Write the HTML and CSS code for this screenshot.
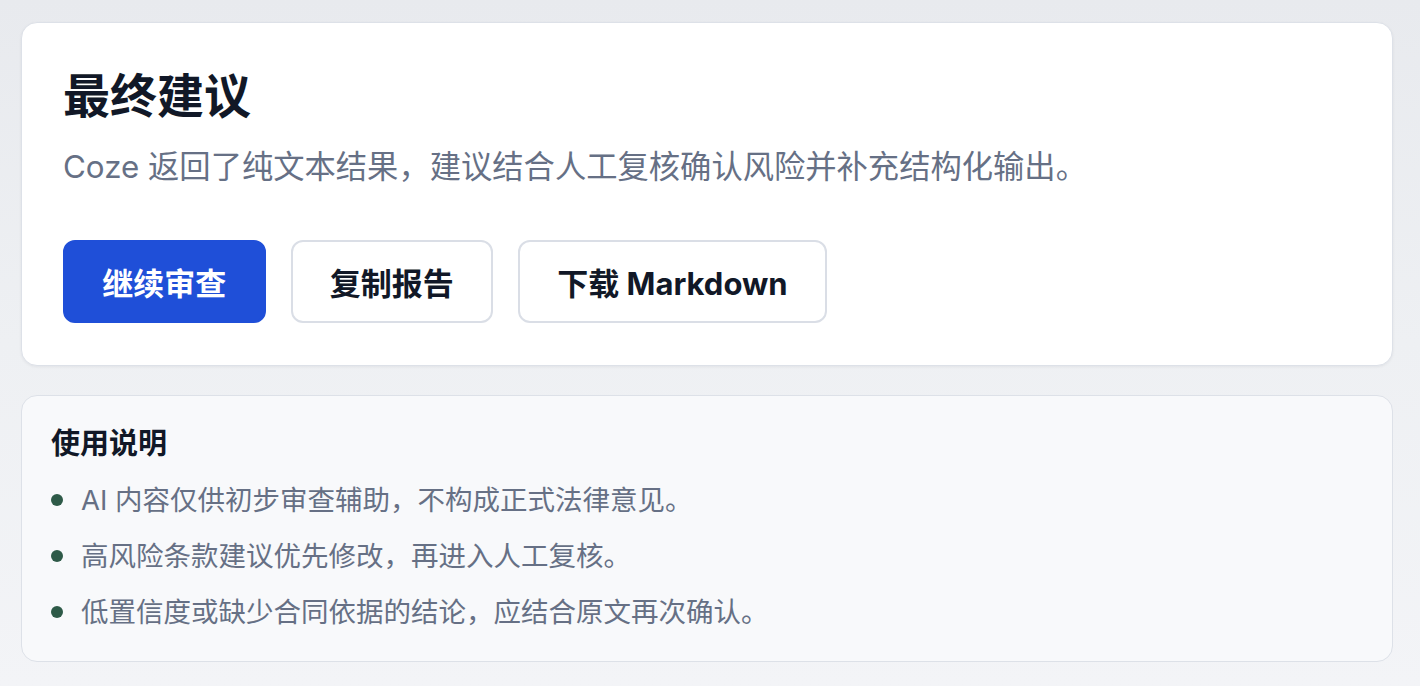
FILE: index.html
```html
<!DOCTYPE html>
<html lang="zh-CN">
<head>
<meta charset="utf-8">
<title>最终建议</title>
<link rel="stylesheet" href="styles.css">
</head>
<body>
<main class="page">
  <section class="card summary">
    <h1 class="title">最终建议</h1>
    <p class="subtitle">Coze 返回了纯文本结果，建议结合人工复核确认风险并补充结构化输出。</p>
    <div class="actions">
      <button class="btn btn-primary">继续审查</button>
      <button class="btn">复制报告</button>
      <button class="btn">下载 Markdown</button>
    </div>
  </section>
  <section class="card notes">
    <h2 class="notes-title">使用说明</h2>
    <ul class="notes-list">
      <li class="note"><span class="dot"></span>AI 内容仅供初步审查辅助，不构成正式法律意见。</li>
      <li class="note"><span class="dot"></span>高风险条款建议优先修改，再进入人工复核。</li>
      <li class="note"><span class="dot"></span>低置信度或缺少合同依据的结论，应结合原文再次确认。</li>
    </ul>
  </section>
</main>
</body>
</html>
```

FILE: styles.css
```css
* { box-sizing: border-box; }
html, body { margin: 0; padding: 0; }
body {
  width: 1420px;
  height: 686px;
  overflow: hidden;
  background: linear-gradient(180deg, #e8eaee 0%, #eef0f3 50%, #f3f4f7 100%);
  font-family: "Inter", "Noto Sans CJK SC", sans-serif;
}
.page {
  padding: 22px 27px 0 21px;
  display: flex;
  flex-direction: column;
  gap: 29px;
}
.card {
  border: 1.5px solid #dde1e8;
  border-radius: 16px;
}
.summary {
  background: #ffffff;
  padding: 44px 41px 42px;
  box-shadow: 0 1px 3px rgba(16, 24, 40, 0.06);
}
.title {
  margin: 0;
  font-size: 47px;
  line-height: 58px;
  font-weight: 700;
  color: #111827;
}
.subtitle {
  margin: 20px 0 0;
  font-size: 31.3px;
  line-height: 44px;
  color: #667085;
}
.actions {
  display: flex;
  gap: 25px;
  margin-top: 51px;
}
.btn {
  height: 83px;
  padding: 0 37.25px;
  border: 2px solid #dadee6;
  border-radius: 12px;
  background: #ffffff;
  color: #111827;
  font-family: "Inter", "Noto Sans CJK SC", sans-serif;
  font-size: 31px;
  font-weight: 700;
}
.btn-primary {
  background: #1f4fd8;
  border-color: #1f4fd8;
  color: #ffffff;
}
.notes {
  background: #f8f9fb;
  padding: 28px 29px 27px;
}
.notes-title {
  margin: 0;
  font-size: 29px;
  line-height: 40px;
  font-weight: 700;
  color: #111827;
}
.notes-list {
  list-style: none;
  margin: 14px 0 0;
  padding: 0;
  display: flex;
  flex-direction: column;
  gap: 12px;
}
.note {
  display: flex;
  align-items: center;
  font-size: 27.5px;
  line-height: 44px;
  color: #667085;
}
.dot {
  width: 12px;
  height: 12px;
  border-radius: 50%;
  background: #2e5a48;
  margin-right: 18px;
  flex: none;
}
```
